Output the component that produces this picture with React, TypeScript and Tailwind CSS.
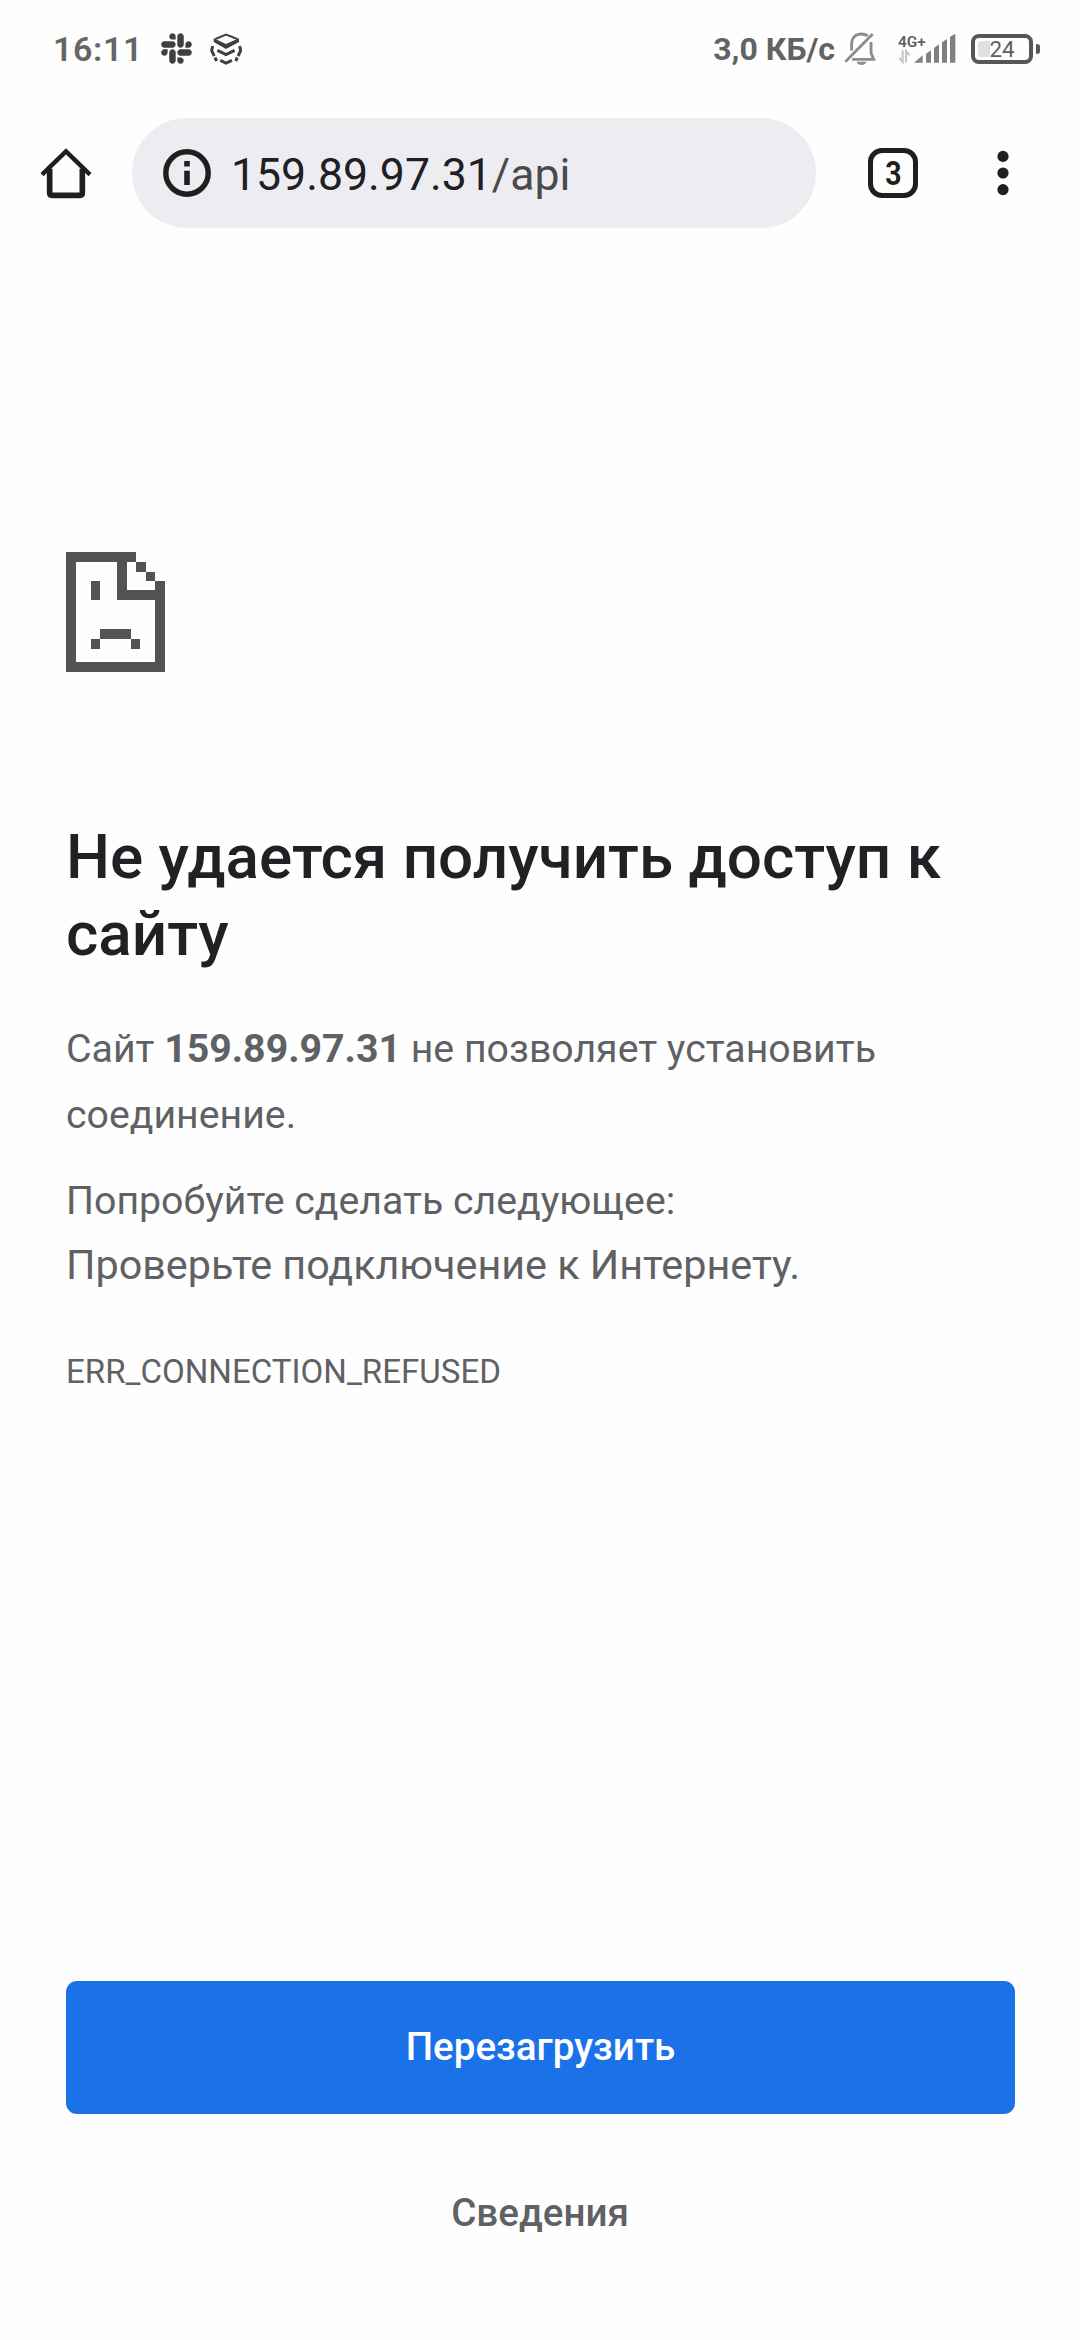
import type { ReactNode } from "react";
import { FaSlack } from "react-icons/fa";

function LayersIcon() {
  return (
    <svg className="h-8 w-8" viewBox="510 36 96 96" fill="none" stroke="#3f3f3f" strokeWidth="9">
      <path d="M526 54 558 41 592 54" strokeWidth="6" />
      <path d="M521 52 558 69 597 52V63L558 84 521 63Z" fill="#3f3f3f" stroke="none" />
      <path d="M518 75 515 89 530 120" strokeDasharray="32 5 20" />
      <path d="M599 75 602 89 587 120" strokeDasharray="32 5 20" />
      <path d="M532 88 558 101 584 88" />
      <path d="M541 118 558 126 576 118" />
    </svg>
  );
}

function BellOffIcon() {
  return (
    <svg className="h-[33px] w-[33px]" viewBox="428 48 100 100" fill="none" stroke="#8c8c8c" strokeWidth="8.5">
      <path d="M432 138 515 54" />
      <path d="M451 104V84C451 64 464 54 481 54 489 54 495 56 500 60" />
      <path d="M510 78V112L518 131H453" />
      <path d="M466 138H496C492 151 470 151 466 138Z" fill="#8c8c8c" stroke="none" />
    </svg>
  );
}

function Signal() {
  return (
    <div className="relative h-[33px] w-[58px]">
      <svg className="h-[33px] w-[58px]" viewBox="591 48 174 99" fill="#808080">
        <path d="M639 140 665 118V140ZM675 113 690 103V140H675ZM699 96 714 85V140H699ZM723 79 738 69V140H723ZM747 62 763 53V140H747Z" />
        <path d="M605 103V138L595 126M615 140V105L626 118" fill="none" stroke="#c4c4c4" strokeWidth="6" />
      </svg>
      <span className="absolute left-0 top-0 text-[15.4px] font-semibold leading-[20px] text-[#606060]">4G+</span>
    </div>
  );
}

function Battery() {
  return (
    <div className="flex items-center gap-[3px]">
      <div className="relative flex h-[30px] w-[62px] items-center justify-center rounded-[8px] border-4 border-[#565656]">
        <div className="absolute left-[3px] top-[3px] h-4 w-3 rounded-l-[3px] bg-[#e0e0e0]" />
        <span className="relative pt-[2px] text-[22.4px] leading-none text-[#5f5f5f]">24</span>
      </div>
      <div className="h-[10px] w-[4px] rounded-r-[3px] rounded-l-[1px] bg-[#565656]" />
    </div>
  );
}

function StatusBar() {
  return (
    <div className="flex h-[97px] items-center justify-between pl-[53px] pr-[40px]">
      <div className="flex items-center">
        <span className="w-[108px] pt-px text-[34px] font-semibold leading-10 tracking-[0.6px] text-[#666]">16:11</span>
        <FaSlack className="h-[35px] w-[31px] text-[#3f3f3f]" />
        <div className="ml-[18px]"><LayersIcon /></div>
      </div>
      <div className="flex items-center">
        <span className="text-[32px] font-bold leading-10 text-[#636363]">3,0 КБ/с</span>
        <div className="ml-[9px]"><BellOffIcon /></div>
        <div className="ml-[21px]"><Signal /></div>
        <div className="ml-[15px]"><Battery /></div>
      </div>
    </div>
  );
}

function Toolbar() {
  return (
    <div className="flex h-[152px] items-center">
      <svg className="ml-10 h-[52px] w-[52px]" viewBox="120 140 156 156" fill="none" stroke="#1f1f1f">
        <path d="M126 223 198 153 270 223" strokeWidth="13" />
        <path d="M149 205V278Q149 285 156 285H240Q247 285 247 278V205" strokeWidth="17" />
      </svg>
      <div className="ml-10 flex h-[110px] w-[684px] items-center rounded-full bg-[#ededf1] pl-[31px]">
        <svg className="h-12 w-12" viewBox="0 0 48 48">
          <circle cx="24" cy="24" r="21.2" fill="none" stroke="#1f1f1f" strokeWidth="5.4" />
          <path d="M21.2 12H26.8V17.4H21.2ZM21.2 21.8H26.8V36H21.2Z" fill="#1f1f1f" />
        </svg>
        <span className="ml-5 pt-1 text-[44.6px] leading-none text-[#202024]">
          159.89.97.31<span className="text-[#4a4a4e]">/api</span>
        </span>
      </div>
      <div className="ml-[52px] flex h-[50px] w-[50px] items-center justify-center rounded-[14px] border-[5.5px] border-[#1f1f1f]">
        <span className="inline-block scale-x-[0.86] text-[33px] font-bold leading-none text-[#1f1f1f]">3</span>
      </div>
      <svg className="ml-[79px] h-[46px] w-3" viewBox="0 0 12 46" fill="#1f1f1f">
        <circle cx="6" cy="6.4" r="5.6" />
        <circle cx="6" cy="23" r="5.6" />
        <circle cx="6" cy="39.6" r="5.6" />
      </svg>
    </div>
  );
}

function SadPage() {
  return (
    <svg className="h-[120px] w-[99px]" viewBox="0 0 99 120" fill="#535353" shapeRendering="crispEdges">
      <path d="M0 0H70V10H10V110H89V48H51V10H61V38H89V29H99V120H0Z" />
      <path d="M70 10H80V20H70ZM80 20H89V29H80Z" />
      <path d="M25 29H34V48H25ZM34 77H65V87H34ZM25 87H34V97H25ZM65 87H74V97H65Z" />
    </svg>
  );
}

function Line({ children }: { children: ReactNode }) {
  return <span className="block whitespace-nowrap">{children}</span>;
}

export default function App() {
  return (
    <div className="flex h-[2340px] w-[1080px] flex-col bg-[#fefefe] font-['Roboto',sans-serif]">
      <StatusBar />
      <Toolbar />
      <main className="flex flex-1 flex-col px-[66px] pt-[303px] text-[#5f6164]">
        <SadPage />
        <h1 className="mt-[146px] text-[62px] font-medium leading-[77px] text-[#202124]">
          <Line>Не удается получить доступ к</Line>
          <Line>сайту</Line>
        </h1>
        <p className="mt-11 text-[39.25px] leading-[66px]">
          <Line>Сайт <b>159.89.97.31</b> не позволяет установить</Line>
          <Line>соединение.</Line>
        </p>
        <p className="mt-[21px] text-[39.25px] leading-[64px]">Попробуйте сделать следующее:</p>
        <p className="-mt-px text-[41.3px] leading-[66px]">Проверьте подключение к Интернету.</p>
        <p className="mt-[52px] text-[33.1px] leading-[44px]">ERR_CONNECTION_REFUSED</p>
        <button className="mt-[587px] h-[133px] w-[949px] shrink-0 rounded-[11px] bg-[#1b72e8] pb-[2px] text-[38.6px] font-medium text-white">
          Перезагрузить
        </button>
        <button className="mt-[73px] h-[52px] self-center text-[38.6px] font-medium leading-[52px]">Сведения</button>
      </main>
    </div>
  );
}
